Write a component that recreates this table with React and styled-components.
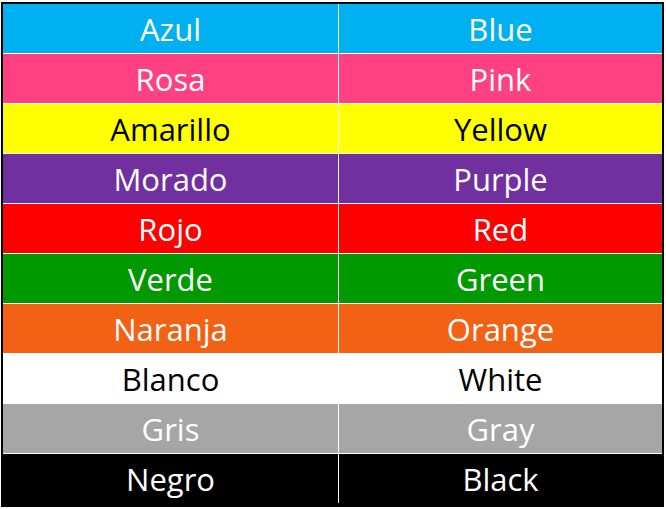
import React from 'react';
import styled, { createGlobalStyle } from 'styled-components';

const GlobalStyle = createGlobalStyle`
  html, body {
    margin: 0;
    padding: 0;
    background: #ffffff;
  }
`;

const colors = [
  { es: 'Azul', en: 'Blue', bg: '#00b0f0', fg: '#ffffff' },
  { es: 'Rosa', en: 'Pink', bg: '#ff4081', fg: '#ffffff' },
  { es: 'Amarillo', en: 'Yellow', bg: '#ffff00', fg: '#000000' },
  { es: 'Morado', en: 'Purple', bg: '#7030a0', fg: '#ffffff' },
  { es: 'Rojo', en: 'Red', bg: '#ff0000', fg: '#ffffff' },
  { es: 'Verde', en: 'Green', bg: '#009900', fg: '#ffffff' },
  { es: 'Naranja', en: 'Orange', bg: '#f26114', fg: '#ffffff' },
  { es: 'Blanco', en: 'White', bg: '#ffffff', fg: '#000000' },
  { es: 'Gris', en: 'Gray', bg: '#a6a6a6', fg: '#ffffff' },
  { es: 'Negro', en: 'Black', bg: '#000000', fg: '#ffffff' },
];

const Page = styled.div`
  padding: 2px 0 0 1px;
`;

const Table = styled.div`
  display: grid;
  grid-template-columns: 335px 323px;
  grid-auto-rows: 49px;
  gap: 1px;
  width: 659px;
  background: #ffffff;
  border: solid #000000;
  border-width: 2px 2px 4px 2px;
`;

const Cell = styled.div`
  display: flex;
  align-items: center;
  justify-content: center;
  padding-top: 2px;
  background: ${(p) => p.bg};
  color: ${(p) => p.fg};
  font-family: 'Open Sans', 'Liberation Sans', sans-serif;
  font-size: 31px;
  line-height: 1;
`;

export default function App() {
  return (
    <Page>
      <GlobalStyle />
      <Table>
        {colors.map((c) => (
          <React.Fragment key={c.en}>
            <Cell bg={c.bg} fg={c.fg}>{c.es}</Cell>
            <Cell bg={c.bg} fg={c.fg}>{c.en}</Cell>
          </React.Fragment>
        ))}
      </Table>
    </Page>
  );
}
